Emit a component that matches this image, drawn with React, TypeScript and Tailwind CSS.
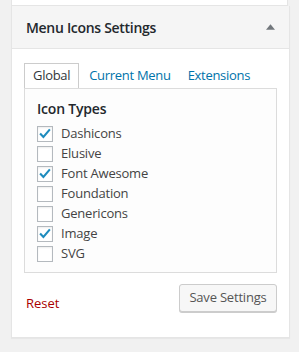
import React from 'react';

const types = [
  { label: 'Dashicons', checked: true },
  { label: 'Elusive', checked: false },
  { label: 'Font Awesome', checked: true },
  { label: 'Foundation', checked: false },
  { label: 'Genericons', checked: false },
  { label: 'Image', checked: true },
  { label: 'SVG', checked: false },
];

const Check: React.FC = () => (
  <svg viewBox="0 0 16 16" className="w-[16px] h-[16px]">
    <path d="M3.2 8.2 L6.2 11.4 L12.8 3.6" fill="none" stroke="#1e8cbe" strokeWidth="2.4" strokeLinecap="square" />
  </svg>
);

export default function App() {
  return (
    <div className="w-[299px] h-[352px] bg-[#f1f1f1] px-[11px] text-[#444] font-['Open_Sans',sans-serif] overflow-hidden">
      {/* previous metabox */}
      <div className="h-[6px] bg-white border-x border-b border-[#e5e5e5]" />

      <div className="w-[279px] bg-white border-x border-b border-[#e5e5e5] shadow-[0_1px_1px_rgba(0,0,0,0.04)]">
        {/* Header */}
        <div className="h-[43px] bg-[#f5f5f5] border-b border-[#e5e5e5] flex items-center justify-between pl-[14px] pr-[14px]">
          <h2 className="text-[14px] font-semibold text-[#23282d] tracking-[-0.3px]">Menu Icons Settings</h2>
          <svg viewBox="0 0 10 6" className="w-[9px] h-[6px]">
            <path d="M5 0 L10 6 L0 6 Z" fill="#72777c" />
          </svg>
        </div>

        {/* Body */}
        <div className="pt-[14px] px-[12px] pb-[23px]">
          <div className="flex text-[13px] tracking-[-0.3px]">
            <div className="h-[25px] px-[8px] flex items-center border-x border-t border-[#ccc] bg-white text-[#32373c] relative -mb-px z-10">
              Global
            </div>
            <div className="h-[25px] pl-[10px] pr-[9px] flex items-center text-[#0073aa]">Current Menu</div>
            <div className="h-[25px] px-[8px] flex items-center text-[#0073aa]">Extensions</div>
          </div>

          <div className="border border-[#dcdcdc] bg-[#fdfdfd] h-[185px] pt-[9px] px-[12px]">
            <div className="text-[14px] font-semibold text-[#23282d] mb-[7px] tracking-[-0.2px]">Icon Types</div>
            <div className="flex flex-col gap-[4px]">
              {types.map((t) => (
                <label key={t.label} className="flex items-center gap-[8px] h-[16px] text-[13px] tracking-[-0.2px]">
                  <span className="w-[16px] h-[16px] border border-[#b4b9be] bg-white shadow-[inset_0_1px_2px_rgba(0,0,0,0.07)] flex items-center justify-center">
                    {t.checked && <Check />}
                  </span>
                  <span>{t.label}</span>
                </label>
              ))}
            </div>
          </div>

          <div className="flex items-start justify-between mt-[11px]">
            <a className="text-[13px] text-[#a00] mt-[10px] ml-[2px]">Reset</a>
            <button className="h-[28px] w-[98px] text-[13px] text-[#555] bg-[#f7f7f7] border border-[#ccc] rounded-[3px] shadow-[0_1px_0_#ccc] tracking-[-0.2px]">
              Save Settings
            </button>
          </div>
        </div>
      </div>
    </div>
  );
}
